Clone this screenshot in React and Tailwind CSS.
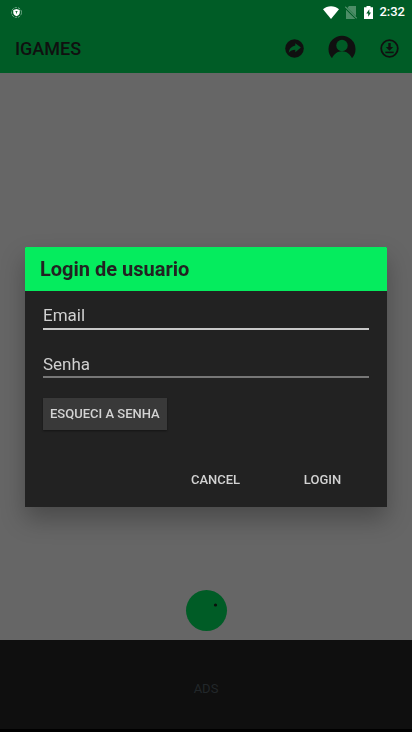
import { useState } from 'react';

function StatusBar() {
  return (
    <div className="h-6 pl-[11px] pr-[7px] flex items-center justify-between text-white">
      <svg className="w-[11px] h-[11px]" viewBox="0 0 22 22" fill="none">
        <circle cx="11" cy="11" r="10" stroke="#8fbda2" strokeWidth="1.6" strokeDasharray="5 2" />
        <path d="M11 4l6.500 2v5c0 3.500-2.500 5.500-6.500 7.500-4-2-6.500-4-6.500-7.500V6z" fill="#fff" />
        <path d="M9 9h4M11 9v4" stroke="#005c26" strokeWidth="1.600" />
      </svg>
      <div className="flex items-center">
        <svg className="w-4 h-[13px]" viewBox="0 0 16 13" fill="#fff">
          <path d="M8 13L0 3.300C2.200 1.300 5 .2 8 .2s5.800 1.100 8 3.100z" />
        </svg>
        <svg className="w-3 h-[13px] ml-[6px]" viewBox="0 0 12 13">
          <path d="M4 0h7v13H1V3.500z" fill="#4d8d67" />
          <path d="M0 1l12 12" stroke="#005c26" strokeWidth="2.400" />
          <path d="M0 .5l12 12" stroke="#7fae92" strokeWidth="1" />
        </svg>
        <svg className="w-[9px] h-[13px] ml-[7px]" viewBox="0 0 9 13">
          <path d="M2.500 0h4v1.300H9V13H0V1.300h2.500z" fill="#fff" />
          <path d="M5.300 3.300L2.300 7.500h1.900v3.300l2.800-4.400H5.300z" fill="#005c26" />
        </svg>
        <span className="ml-[6px] text-[13px] leading-4 font-medium">2:32</span>
      </div>
    </div>
  );
}

function ShareIcon() {
  return (
    <svg className="w-[19px] h-[19px]" viewBox="0 0 19 19">
      <circle cx="9.500" cy="9.500" r="9.300" fill="#101010" />
      <path d="M10.300 4.200L15.900 8.600l-5.600 4.600v-2.500c-3 0-5 1-6.600 3.100.4-3.800 2.600-6.500 6.600-7.200z" fill="#005c26" />
    </svg>
  );
}

function ProfileIcon() {
  return (
    <svg className="w-7 h-7" viewBox="0 0 28 28">
      <path d="M4 23.300A13.500 13.500 0 1 1 24 23.300C22.200 19.100 18.500 16.300 14 16.300S5.800 19.100 4 23.300z" fill="#101010" />
      <circle cx="14" cy="10.500" r="5.700" fill="#005c26" />
    </svg>
  );
}

function DownloadIcon() {
  return (
    <svg className="w-[19px] h-[19px]" viewBox="0 0 19 19">
      <circle cx="9.500" cy="9.500" r="8.300" fill="none" stroke="#101010" strokeWidth="1.800" />
      <path d="M8.300 4h2.400v4h2.500l-3.700 3.700L5.800 8h2.500z" fill="#101010" />
      <path d="M5.300 12.600h8.400v1.600H5.300z" fill="#101010" />
    </svg>
  );
}

function LoginDialog() {
  const [email, setEmail] = useState('');
  const [password, setPassword] = useState('');

  return (
    <div className="fixed inset-0 pt-[22px] px-[25px] flex items-center justify-center">
      <form
        role="dialog"
        aria-labelledby="login-title"
        onSubmit={(e) => e.preventDefault()}
        className="w-full max-w-[480px] rounded-t-[1px] overflow-hidden bg-[#222222] shadow-[0_12px_24px_rgba(0,0,0,0.28)]"
      >
        <h2
          id="login-title"
          className="h-11 px-[15px] flex items-center bg-[#05ec5e] text-[#222222] text-xl font-bold"
        >
          Login de usuario
        </h2>

        {/* Fields */}
        <div className="px-[18px] pt-3">
          <input
            type="email"
            aria-label="Email"
            placeholder="Email"
            value={email}
            onChange={(e) => setEmail(e.target.value)}
            className="block w-full h-[27px] pb-[2px] border-b-2 border-[#c8c8c8] text-[17px] text-[#d0d0d0] placeholder:text-[#d0d0d0] outline-none"
          />
          <input
            type="password"
            aria-label="Senha"
            placeholder="Senha"
            value={password}
            onChange={(e) => setPassword(e.target.value)}
            className="block w-full h-[27px] mt-[21px] border-b-2 border-[#777777] text-[17px] text-[#d0d0d0] placeholder:text-[#d0d0d0] outline-none"
          />
          <button
            type="button"
            className="h-8 mt-5 px-[7px] bg-[#393939] text-[#d3d3d3] text-[13px] font-medium shadow-[0_1px_2px_rgba(0,0,0,0.4)]"
          >
            ESQUECI A SENHA
          </button>
        </div>

        {/* Actions */}
        <div className="pt-8 pb-[9px] pr-[11px] flex justify-end text-[#d3d3d3] text-[13px] font-medium">
          <button type="button" className="w-[107px] h-9">CANCEL</button>
          <button type="submit" className="w-[107px] h-9">LOGIN</button>
        </div>
      </form>
    </div>
  );
}

export default function App() {
  return (
    <div className="min-h-screen flex flex-col bg-[#666666] font-[Roboto,sans-serif]">
      <header className="bg-[#005c26]">
        <StatusBar />
        <div className="h-[49px] pl-[15px] pr-[13px] flex items-center justify-between">
          <h1 className="text-lg font-medium text-[#101010]">IGAMES</h1>
          <div className="flex items-center gap-6">
            <button aria-label="Compartilhar"><ShareIcon /></button>
            <button aria-label="Perfil"><ProfileIcon /></button>
            <button aria-label="Baixar"><DownloadIcon /></button>
          </div>
        </div>
      </header>

      <main className="flex-1 pb-[9px] flex items-end justify-center">
        <button aria-label="Menu" className="w-[41px] h-[41px] rounded-full bg-[#005c26]">
          <svg className="w-full h-full" viewBox="0 0 41 41">
            <circle cx="29.500" cy="15" r="1.600" fill="#0a0f0c" />
          </svg>
        </button>
      </main>

      <footer className="h-[92px] pt-2 flex items-center justify-center bg-[#0f0f0f] border-b-3 border-black text-[13px] text-[#22272a]">
        ADS
      </footer>

      <LoginDialog />
    </div>
  );
}
